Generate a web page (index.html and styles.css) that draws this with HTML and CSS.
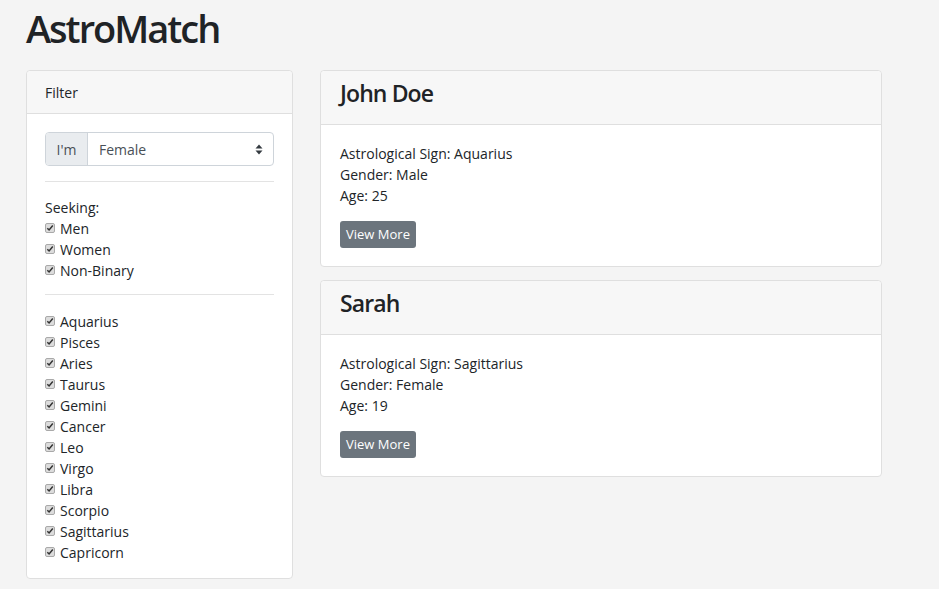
FILE: index.html
```html
<!DOCTYPE html>
<html lang="en">
<head>
<meta charset="utf-8">
<title>AstroMatch</title>
<link rel="stylesheet" href="styles.css">
</head>
<body>
<div class="page">
  <h1 class="title">AstroMatch</h1>
  <div class="layout">
    <aside class="card filter">
      <div class="card-header filter-header">Filter</div>
      <div class="card-body filter-body">
        <div class="input-group">
          <span class="addon">I'm</span>
          <div class="select">
            <span>Female</span>
            <svg class="arrows" width="8" height="11" viewBox="0 0 8 11"><path d="M4 0.5 L7.5 4.5 L0.5 4.5 Z M4 10.5 L7.5 6.5 L0.5 6.5 Z" fill="#343a40"/></svg>
          </div>
        </div>
        <hr class="rule rule-first">
        <div class="label">Seeking:</div>
        <ul class="checks">
          <li><span class="box"></span>Men</li>
          <li><span class="box"></span>Women</li>
          <li><span class="box"></span>Non-Binary</li>
        </ul>
        <hr class="rule rule-second">
        <ul class="checks">
          <li><span class="box"></span>Aquarius</li>
          <li><span class="box"></span>Pisces</li>
          <li><span class="box"></span>Aries</li>
          <li><span class="box"></span>Taurus</li>
          <li><span class="box"></span>Gemini</li>
          <li><span class="box"></span>Cancer</li>
          <li><span class="box"></span>Leo</li>
          <li><span class="box"></span>Virgo</li>
          <li><span class="box"></span>Libra</li>
          <li><span class="box"></span>Scorpio</li>
          <li><span class="box"></span>Sagittarius</li>
          <li><span class="box"></span>Capricorn</li>
        </ul>
      </div>
    </aside>
    <main class="results">
      <section class="card match">
        <div class="card-header match-header"><h4 class="name">John Doe</h4></div>
        <div class="card-body match-body">
          <p class="info">Astrological Sign: Aquarius</p>
          <p class="info">Gender: Male</p>
          <p class="info">Age: 25</p>
          <button class="btn">View More</button>
        </div>
      </section>
      <section class="card match">
        <div class="card-header match-header"><h4 class="name">Sarah</h4></div>
        <div class="card-body match-body">
          <p class="info">Astrological Sign: Sagittarius</p>
          <p class="info">Gender: Female</p>
          <p class="info">Age: 19</p>
          <button class="btn">View More</button>
        </div>
      </section>
    </main>
  </div>
</div>
</body>
</html>
```
FILE: styles.css
```css
* { box-sizing: border-box; }
html, body { margin: 0; padding: 0; }
body {
  background: #f4f4f4;
  color: #212529;
  font-family: "Open Sans", "Noto Sans", sans-serif;
  font-size: 14px;
  line-height: 21px;
}
.page {
  padding: 4px 26px 0 26px;
}
.title {
  margin: 0 0 18px 0;
  font-size: 38px;
  line-height: 48px;
  font-weight: 600;
  letter-spacing: -2px;
  color: #1f2326;
}
.layout {
  display: flex;
  align-items: flex-start;
  gap: 27px;
}
.card {
  background: #fff;
  border: 1px solid #dfdfdf;
  border-radius: 4px;
}
.card-header {
  background: #f7f7f7;
  border-bottom: 1px solid #dfdfdf;
  border-radius: 4px 4px 0 0;
}
.filter { width: 267px; flex: none; }
.filter-header { padding: 11px 18px 10px; }
.filter-body { padding: 18px 18px 15px; }
.input-group {
  display: flex;
  height: 34px;
  border: 1px solid #ced4da;
  border-radius: 4px;
}
.addon {
  width: 42px;
  background: #e9ecef;
  border-right: 1px solid #ced4da;
  color: #495057;
  display: flex;
  align-items: center;
  justify-content: center;
  border-radius: 3px 0 0 3px;
}
.select {
  flex: 1;
  display: flex;
  align-items: center;
  justify-content: space-between;
  padding: 0 10px 0 11px;
  color: #495057;
}
.arrows { display: block; }
.rule {
  border: 0;
  border-top: 1px solid #e3e3e3;
  margin: 15px 0;
}
.rule-second { margin: 13px 0 16px; }
.checks {
  list-style: none;
  margin: 0;
  padding: 0;
}
.checks li {
  display: flex;
  align-items: center;
}
.box {
  width: 10px;
  height: 10px;
  margin-right: 5px;
  border: 1px solid #a9a9a9;
  border-radius: 2px;
  background: #dcdcdc url("data:image/svg+xml;utf8,<svg xmlns='http://www.w3.org/2000/svg' width='8' height='8' viewBox='0 0 8 8'><path d='M1.3 4.2 L3.1 6 L6.8 1.6' fill='none' stroke='%23333' stroke-width='1.5'/></svg>") center/8px 8px no-repeat;
  position: relative;
  top: -1px;
}
.results {
  width: 562px;
  flex: none;
  display: flex;
  flex-direction: column;
  gap: 13px;
}
.match-header { padding: 8px 19px 16px; }
.name {
  margin: 0;
  font-size: 23px;
  line-height: 29px;
  font-weight: 600;
  letter-spacing: -0.9px;
  color: #1f2326;
}
.match-body { padding: 18px 18px 18px 19px; }
.info { margin: 0; }
.btn {
  margin-top: 15px;
  width: 76px;
  height: 27px;
  padding: 0;
  border: 0;
  border-radius: 3px;
  background: #6c757d;
  color: #fff;
  font-family: inherit;
  font-size: 13px;
  line-height: 27px;
  display: block;
}
```
